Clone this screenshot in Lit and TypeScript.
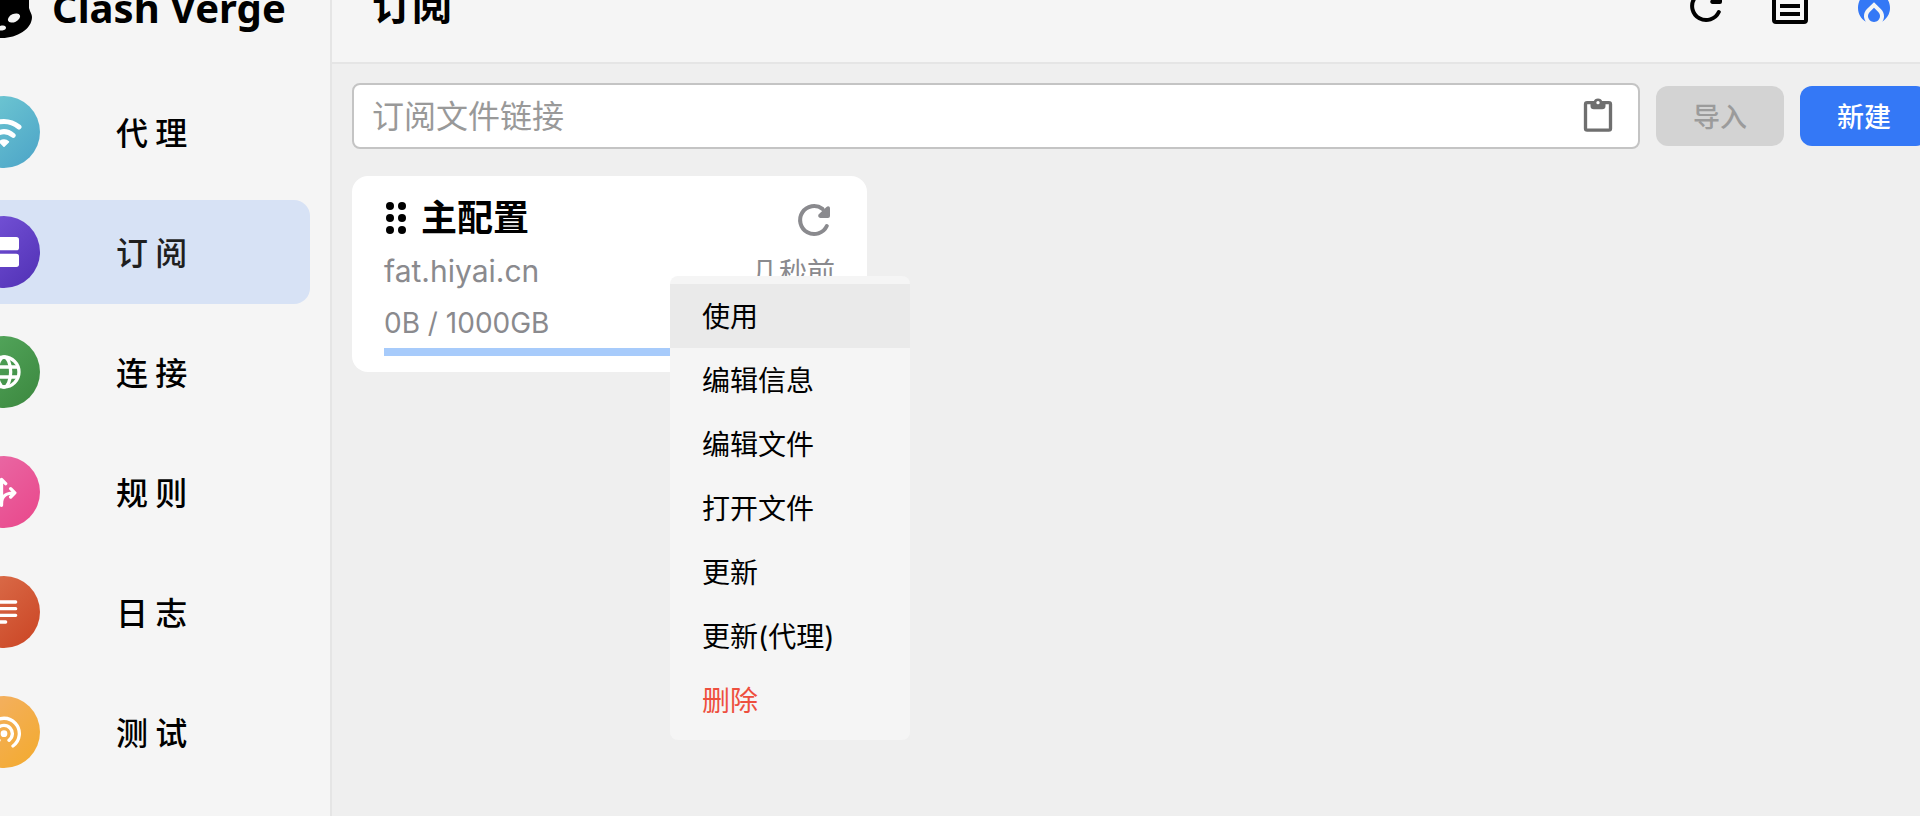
import { LitElement, html, css, svg } from "lit";
import { customElement, state } from "lit/decorators.js";

const REFRESH = svg`<path fill="none" stroke="currentColor" stroke-width="4" stroke-linecap="round" d="M36.800 30A14 14 0 1 1 32.500 12.800"/><path fill="currentColor" d="M40 12.500v7.500a2 2 0 0 1-2 2h-7.500c-2.200 0-3-2.400-1.500-3.900l7.500-7c1.500-1.500 3.500-.8 3.500 1.400z"/>`;

const NAV = [
  { label: "代 理", tone: "teal", icon: svg`<path fill="none" stroke="#fff" stroke-width="3" stroke-linecap="round" d="M3 9C8.500 4.500 15.500 4.500 21 9M6.500 14C10 11.200 14 11.200 17.500 14"/><path fill="#fff" d="M12 20.500l-2.600-2.600c1.400-1.500 3.800-1.500 5.200 0z" stroke="#fff" stroke-linejoin="round"/>` },
  { label: "订 阅", tone: "violet", icon: svg`<rect x="3" y="3" width="18" height="8" rx="1.600" fill="#fff"/><rect x="3" y="13" width="18" height="8" rx="1.600" fill="#fff"/>` },
  { label: "连 接", tone: "green", icon: svg`<g fill="none" stroke="#fff" stroke-width="2"><circle cx="12" cy="12" r="9"/><ellipse cx="12" cy="12" rx="4" ry="9"/><path d="M4 9h16M4 15h16"/></g>` },
  { label: "规 则", tone: "pink", icon: svg`<g fill="none" stroke="#fff" stroke-width="2" stroke-linecap="round" stroke-linejoin="round"><path d="M10.500 20V5M8 7l2.500-2.500L13 7M10.500 19c0-5 3-6.500 8-6.500M16 10l2.500 2.500L16 15M10.500 19c0-5-2-6.500-6-6.500"/></g>` },
  { label: "日 志", tone: "red", icon: svg`<path fill="none" stroke="#fff" stroke-width="2" stroke-linecap="round" d="M5 6h14M5 10h14M5 14h14M5 18h8"/>` },
  { label: "测 试", tone: "amber", icon: svg`<g fill="none" stroke="#fff" stroke-width="2" stroke-linecap="round"><path d="M17.400 20.400A9.200 9.200 0 1 0 6.600 20.400M15 17a5 5 0 1 0-6 0"/></g><circle cx="12" cy="13" r="2" fill="#fff"/>` },
];

const MENU = ["使用", "编辑信息", "编辑文件", "打开文件", "更新", "更新(代理)", "删除"];

@customElement("app-root")
export class AppRoot extends LitElement {
  @state() private current = 1;

  static styles = css`
    :host {
      display: block;
      height: 100vh;
      overflow: hidden;
      background: #efefef;
      color: #000;
      font-family: Inter, "Noto Sans CJK SC", sans-serif;
    }
    * { box-sizing: border-box; }
    button, input { font: inherit; color: inherit; border: 0; margin: 0; }
    button { padding: 0; background: none; cursor: pointer; }
    svg { display: block; flex: none; }
    .shell {
      display: grid;
      grid-template-columns: 400px minmax(0, 1fr);
      min-height: calc(100vh + 52px);
      margin: -52px -40px 0 -68px;
    }
    .side { background: #f5f5f5; border-right: 2px solid #e5e5e5; }
    .brand {
      display: flex;
      align-items: center;
      gap: 20px;
      height: 116px;
      padding: 4px 0 0 36px;
      font: 700 40px/60px "Noto Sans", sans-serif;
    }
    .nav { display: grid; gap: 16px; padding: 16px 20px 0 20px; }
    .item {
      display: flex;
      align-items: center;
      gap: 76px;
      height: 104px;
      padding-left: 16px;
      border-radius: 16px;
      color: inherit;
      text-decoration: none;
      font-family: "Noto Sans CJK SC", sans-serif;
      font-size: 32px;
      line-height: 48px;
      font-weight: 500;
    }
    .item.on { background: #d7e2f5; color: #1f1f1f; }
    .label { padding-bottom: 3px; }
    .disc {
      display: grid;
      place-items: center;
      width: 72px;
      height: 72px;
      border-radius: 50%;
    }
    .teal { background: linear-gradient(135deg, #74cdd4, #4ba3c7); }
    .violet { background: linear-gradient(135deg, #7a58dc, #5030b4); }
    .green { background: linear-gradient(135deg, #57ab61, #3b873e); }
    .pink { background: linear-gradient(135deg, #e96fa9, #e9468a); }
    .red { background: linear-gradient(135deg, #dd7350, #ca4423); }
    .amber { background: linear-gradient(135deg, #f3b16c, #f3aa2c); }
    .top {
      display: flex;
      align-items: center;
      justify-content: space-between;
      height: 116px;
      padding: 2px 62px 0 40px;
      background: #f5f5f5;
      border-bottom: 2px solid #e5e5e5;
    }
    h1 { margin: 0; font-size: 40px; line-height: 60px; font-weight: 700; }
    .tools { display: flex; gap: 36px; }
    .tools .blue { color: #3478f6; }
    .body { padding: 19px 32px 0 20px; }
    .form { display: flex; align-items: center; gap: 16px; }
    .field {
      display: flex;
      align-items: center;
      flex: 1;
      min-width: 0;
      height: 66px;
      padding: 0 20px 0 18px;
      border: 2px solid #c4c4c4;
      border-radius: 8px;
      background: #fff;
      color: #6f6f6f;
    }
    .field input {
      flex: 1;
      min-width: 0;
      padding: 2px 0 0;
      background: none;
      outline: 0;
      font-size: 32px;
      line-height: 48px;
    }
    .field input::placeholder { color: #999; opacity: 1; }
    .btn {
      width: 128px;
      height: 60px;
      padding-bottom: 2px;
      border-radius: 12px;
      font-size: 27px;
      font-weight: 500;
      color: #fff;
      background: #3478f6;
    }
    .btn:disabled { background: #d3d3d3; color: #9b9b9b; }
    .card {
      width: 515px;
      margin-top: 27px;
      padding: 16px 32px;
      border-radius: 16px;
      background: #fff;
      color: #8a8a8e;
    }
    .row { display: flex; align-items: center; justify-content: space-between; }
    .name { display: flex; align-items: center; gap: 14px; color: #000; height: 52px; }
    h2 { margin: 0; font-size: 36px; line-height: 52px; font-weight: 700; }
    .source { height: 53px; font-size: 30px; }
    .ago, .usage { font-size: 28px; }
    .usage { height: 51px; line-height: 52px; }
    .bar { height: 8px; background: #a7cbfb; }
    .menu {
      position: absolute;
      left: 670px;
      top: 276px;
      width: 240px;
      padding: 8px 0;
      border-radius: 8px;
      background: #f5f5f5;
      font-size: 28px;
    }
    .menu button { display: block; width: 100%; height: 64px; padding: 0 0 2px 32px; text-align: left; }
    .menu button:first-child { background: #eaeaea; }
    .menu button:last-child { color: #ee4f3e; }
  `;

  render() {
    return html`
      <div class="shell">
        <aside class="side">
          <div class="brand">
            <svg width="64" height="72" viewBox="0 0 64 72"><path d="M0 0H61V36C62 40 64 42 64 45C64 57 49 66 34 66C14 66 0 56 0 40z"/><ellipse cx="46" cy="46" rx="6.500" ry="4" transform="rotate(-25 46 46)" fill="#f5f5f5"/><ellipse cx="34" cy="56" rx="4" ry="2.500" transform="rotate(-10 34 56)" fill="#f5f5f5"/></svg>
            <span>Clash Verge</span>
          </div>
          <nav class="nav">
            ${NAV.map(
              (n, i) => html`<a href="#" class="item ${i === this.current ? "on" : ""}" @click=${(e: Event) => { e.preventDefault(); this.current = i; }}>
                <span class="disc ${n.tone}"><svg width="40" height="40" viewBox="0 0 24 24">${n.icon}</svg></span>
                <span class="label">${n.label}</span>
              </a>`
            )}
          </nav>
        </aside>
        <main>
          <header class="top">
            <h1>订阅</h1>
            <div class="tools">
              <button aria-label="刷新"><svg width="48" height="48" viewBox="0 0 48 48">${REFRESH}</svg></button>
              <button aria-label="列表"><svg width="48" height="48" viewBox="0 0 48 48"><rect x="8" y="8" width="32" height="32" rx="2" fill="none" stroke="currentColor" stroke-width="4"/><path stroke="currentColor" stroke-width="4" d="M14 16h20M14 24h20M14 32h20"/></svg></button>
              <button class="blue" aria-label="运行"><svg width="48" height="48" viewBox="0 0 24 24"><path fill="currentColor" d="M12 12.900l-2.130 2.090c-.56.560-.87 1.290-.87 2.070C9 18.680 10.350 20 12 20s3-1.320 3-2.940c0-.78-.31-1.520-.87-2.070z"/><path fill="currentColor" d="M16 6l-.44.550C14.380 8.020 12 7.190 12 5.300V2S4 6 4 13c0 2.920 1.560 5.470 3.890 6.860-.56-.79-.89-1.760-.89-2.800 0-1.320.52-2.560 1.470-3.500L12 10.100l3.530 3.470c.95.930 1.470 2.170 1.470 3.500 0 1.020-.31 1.960-.85 2.750 1.890-1.150 3.290-3.060 3.710-5.300.66-3.550-1.070-6.900-3.860-8.520z"/></svg></button>
            </div>
          </header>
          <section class="body">
            <div class="form">
              <div class="field">
                <input type="text" placeholder="订阅文件链接" aria-label="订阅文件链接" />
                <button aria-label="粘贴"><svg width="40" height="40" viewBox="0 0 24 24"><rect x="4.500" y="4" width="15" height="16.500" rx="1" fill="none" stroke="currentColor" stroke-width="2"/><path fill="currentColor" d="M7.500 3.500h1.900a2.700 2.700 0 0 1 5.200 0h1.900V6a2 2 0 0 1-2 2h-5a2 2 0 0 1-2-2z"/><circle cx="12" cy="4" r="1" fill="#fff"/></svg></button>
              </div>
              <button class="btn" disabled>导入</button>
              <button class="btn">新建</button>
            </div>
            <article class="card">
              <div class="row">
                <div class="name">
                  <svg width="23" height="34" viewBox="0 0 23 34"><circle cx="6" cy="5" r="4"/><circle cx="18" cy="5" r="4"/><circle cx="6" cy="17" r="4"/><circle cx="18" cy="17" r="4"/><circle cx="6" cy="29" r="4"/><circle cx="18" cy="29" r="4"/></svg>
                  <h2>主配置</h2>
                </div>
                <button aria-label="更新"><svg width="40" height="40" viewBox="5 2 40 40">${REFRESH}</svg></button>
              </div>
              <div class="row source"><span>fat.hiyai.cn</span><span class="ago">几秒前</span></div>
              <div class="usage">0B / 1000GB</div>
              <div class="bar"></div>
            </article>
          </section>
        </main>
      </div>
      <div class="menu" role="menu">${MENU.map((m) => html`<button role="menuitem">${m}</button>`)}</div>
    `;
  }
}
